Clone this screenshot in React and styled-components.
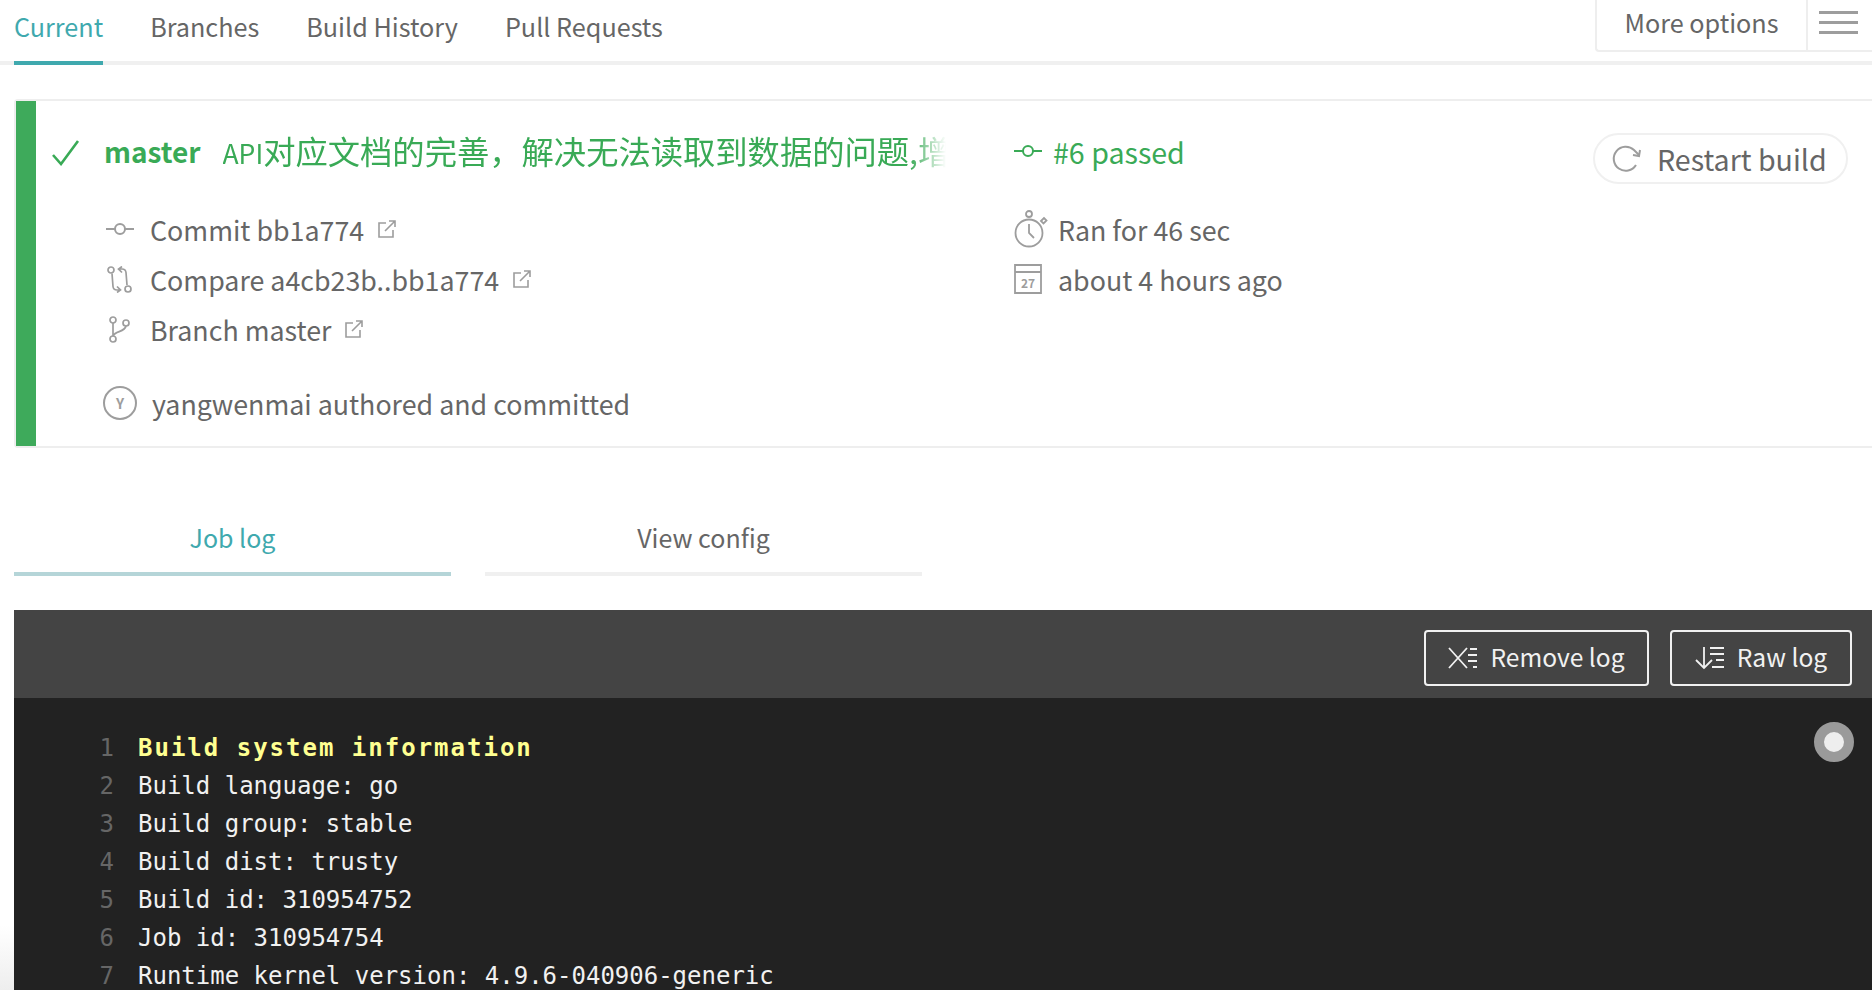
import React from 'react'
import styled, { createGlobalStyle } from 'styled-components'

const GlobalStyle = createGlobalStyle`
  html, body {
    margin: 0;
    padding: 0;
    height: 990px;
    overflow: hidden;
    background: #fff;
    color: #666;
    font-family: "Noto Sans CJK SC", "Noto Sans", sans-serif;
    font-size: 26.8px;
  }
`

const TEAL = '#3fa9ae'
const GREEN = '#39aa56'
const ICON = '#9d9d9d'

const Page = styled.div`
  width: 1872px;
  height: 990px;
  overflow: hidden;
  position: relative;
  background: linear-gradient(to bottom, #fff 925px, #eee 990px);
`

const TopBar = styled.div`
  display: flex;
  justify-content: space-between;
  height: 61px;
  border-bottom: 4px solid #f0f0f0;
  padding-left: 14px;
  font-size: 25.2px;
`

const NavTabs = styled.nav`
  display: flex;
  gap: 47px;
`

const NavTab = styled.a`
  height: 61px;
  line-height: 52px;
  margin-bottom: -4px;
  color: ${(p) => (p.$active ? TEAL : '#666')};
  border-bottom: 4px solid ${(p) => (p.$active ? TEAL : 'transparent')};
`

const OptionsBox = styled.div`
  display: flex;
  width: 277px;
  height: 52px;
  box-sizing: border-box;
  border: 2px solid #eee;
  border-top: none;
  border-right: none;
  border-bottom-left-radius: 4px;
`

const OptionsLabel = styled.div`
  width: 209px;
  text-align: center;
  line-height: 44px;
  border-right: 2px solid #eee;
`

const Burger = styled.div`
  flex: 1;
  display: flex;
  flex-direction: column;
  gap: 7px;
  padding: 11px 14px 0 11px;
`

const BurgerLine = styled.span`
  display: block;
  height: 3px;
  background: #9d9d9d;
`

const BuildCard = styled.section`
  display: flex;
  height: 349px;
  margin: 34px 0 0 14px;
  box-sizing: border-box;
  border: 2px solid #eee;
  border-right: none;
  border-top-left-radius: 4px;
  border-bottom-left-radius: 4px;
`

const StatusBar = styled.div`
  width: 20px;
  background: #3eaa5b;
`

const MainCol = styled.div`
  width: 978px;
  padding-top: 29px;
`

const SideCol = styled.div`
  flex: 1;
  padding-top: 29px;
`

const HeadRow = styled.div`
  display: flex;
  align-items: center;
  height: 42px;
  margin-bottom: 32px;
  color: ${GREEN};
  font-size: ${(p) => p.$size || 28}px;
  white-space: nowrap;
`

const CheckSlot = styled.div`
  width: 68px;
  padding: 4px 0 0 16px;
  box-sizing: border-box;
  display: flex;
`

const BranchName = styled.strong`
  font-weight: 600;
  margin-right: 22px;
`

const CommitMessage = styled.div`
  width: 723px;
  overflow: hidden;
  line-height: 42px;
  font-size: 26.5px;
  -webkit-mask-image: linear-gradient(to right, #000 95%, transparent 100%);
  mask-image: linear-gradient(to right, #000 95%, transparent 100%);
`

const Chinese = styled.span`
  font-size: 32.3px;
`

const InfoRow = styled.div`
  display: flex;
  align-items: center;
  height: 50px;
  padding-left: ${(p) => p.$indent || 0}px;
  margin-top: ${(p) => p.$gap || 0}px;
  white-space: nowrap;
`

const IconSlot = styled.span`
  display: flex;
  box-sizing: border-box;
  width: ${(p) => p.$width}px;
  padding-left: ${(p) => p.$pad || 0}px;
  flex: none;
`

const OutLink = styled.span`
  display: flex;
  margin-left: 14px;
`

const Avatar = styled.span`
  width: 30px;
  height: 30px;
  border: 2px solid ${ICON};
  border-radius: 50%;
  display: flex;
  align-items: center;
  justify-content: center;
  font-size: 14px;
  font-weight: 700;
  color: ${ICON};
  margin: 0 15px 0 -1px;
`

const RestartButton = styled.button`
  align-self: flex-start;
  display: flex;
  align-items: center;
  width: 255px;
  height: 51px;
  margin: 32px 24px 0 0;
  padding: 0 0 0 17px;
  box-sizing: border-box;
  background: #fff;
  border: 2px solid #f0f0f0;
  border-radius: 26px;
  font: inherit;
  font-size: 28.6px;
  color: #666;
  gap: 15px;
`

const LogTabs = styled.div`
  display: flex;
  gap: 34px;
  margin: 72px 0 0 14px;
`

const LogTab = styled.a`
  width: 437px;
  height: 52px;
  text-align: center;
  line-height: 34px;
  font-size: 25px;
  color: ${(p) => (p.$active ? TEAL : '#666')};
  border-bottom: 4px solid ${(p) => (p.$active ? '#b5d5d8' : '#f0f0f0')};
`

const LogPanel = styled.section`
  margin: 34px 0 0 14px;
`

const LogToolbar = styled.div`
  display: flex;
  justify-content: flex-end;
  gap: 21px;
  height: 88px;
  box-sizing: border-box;
  padding: 20px 20px 0 0;
  background: #444;
`

const LogButton = styled.a`
  display: flex;
  align-items: center;
  justify-content: center;
  gap: 12px;
  height: 56px;
  width: ${(p) => p.$width}px;
  box-sizing: border-box;
  padding-bottom: 5px;
  border: 2px solid #f1f1f1;
  border-radius: 4px;
  color: #f1f1f1;
  font-size: 24.6px;

  svg {
    margin-top: 5px;
  }
`

const LogBody = styled.div`
  position: relative;
  height: 291px;
  padding-top: 31px;
  background: #222;
  font-family: "DejaVu Sans Mono", "Liberation Mono", monospace;
  font-size: 24px;
  line-height: 38px;
`

const LogLine = styled.div`
  display: flex;
  white-space: pre;
  color: ${(p) => (p.$head ? '#ffff91' : '#f1f1f1')};
  font-weight: ${(p) => (p.$head ? 700 : 400)};
  letter-spacing: ${(p) => (p.$head ? 2 : 0)}px;
`

const LineNumber = styled.span`
  width: 124px;
  padding-right: 24px;
  box-sizing: border-box;
  text-align: right;
  color: #666;
  font-weight: 400;
  letter-spacing: 0;
`

const ScrollDot = styled.div`
  position: absolute;
  top: 24px;
  right: 18px;
  width: 20px;
  height: 20px;
  border: 10px solid #9a9a9a;
  border-radius: 50%;
  background: #eee;
`

const CheckIcon = () => (
  <svg width="28" height="26" viewBox="0 0 28 26" fill="none" stroke={GREEN} strokeWidth="2.6">
    <path d="M1 15l8 9L26 1" />
  </svg>
)

const CommitIcon = ({ color = ICON }) => (
  <svg width="28" height="14" viewBox="0 0 28 14" fill="none" stroke={color} strokeWidth="2">
    <circle cx="14" cy="7" r="5" />
    <path d="M0 7h9M19 7h9" />
  </svg>
)

const CompareIcon = () => (
  <svg width="25" height="27" viewBox="0 0 25 27" fill="none" stroke={ICON} strokeWidth="1.7">
    <circle cx="4" cy="4" r="3" />
    <circle cx="21" cy="23" r="3" />
    <path d="M5 7.500l1 13c.3 3 2 3.500 4 3.500h3M10 20.500l3.500 3.500-3.500 2.500M20 19L19 6.500C18.700 3.500 17 3 15 3h-2M15 6.500L11.500 3 15 .5" />
  </svg>
)

const BranchIcon = () => (
  <svg width="22" height="27" viewBox="0 0 22 27" fill="none" stroke={ICON} strokeWidth="1.7">
    <circle cx="4" cy="4" r="3" />
    <circle cx="4" cy="23" r="3" />
    <circle cx="17" cy="7" r="3" />
    <path d="M4 7v13M4.500 19.500C6 15 16 16 17 10" />
  </svg>
)

const ExternalIcon = () => (
  <svg width="18" height="18" viewBox="0 0 18 18" fill="none" stroke={ICON} strokeWidth="1.6">
    <path d="M8 3H1v14h14v-7M7 11L17 1M11 1h6v6" />
  </svg>
)

const WatchIcon = () => (
  <svg width="34" height="38" viewBox="0 0 34 38" fill="none" stroke={ICON} strokeWidth="1.8">
    <circle cx="15" cy="4" r="3" />
    <circle cx="15" cy="23" r="13.500" />
    <path d="M15 14v9l5 5M27 11l3-3 2.500 2.500-3 3z" />
  </svg>
)

const CalendarIcon = () => (
  <svg width="28" height="30" viewBox="0 0 28 30" fill="none" stroke={ICON} strokeWidth="1.8">
    <path d="M1 1h26v28H1zM1 8h26" />
    <text x="14" y="24" fontSize="12" fontWeight="700" textAnchor="middle" fill={ICON} stroke="none">27</text>
  </svg>
)

const RestartIcon = () => (
  <svg width="30" height="28" viewBox="0 0 30 28" fill="none" stroke={ICON} strokeWidth="2">
    <path d="M24 20a12 12 0 1 1-2-15l5 5" />
    <path d="M28 5l-1 6-6-1" />
  </svg>
)

const RemoveIcon = () => (
  <svg width="30" height="22" viewBox="0 0 30 22" fill="none" stroke="#f1f1f1" strokeWidth="1.8">
    <path d="M1 1l18 20M19 1L1 21M22 2h7M20 8h9M20 14h9M25 20h4" />
  </svg>
)

const RawIcon = () => (
  <svg width="30" height="24" viewBox="0 0 30 24" fill="none" stroke="#f1f1f1" strokeWidth="1.8">
    <path d="M9 1v21M1 14l8 8 8-8M15 2h14M15 8h14M21 14h8M17 21h12" />
  </svg>
)

const logLines = [
  'Build system information',
  'Build language: go',
  'Build group: stable',
  'Build dist: trusty',
  'Build id: 310954752',
  'Job id: 310954754',
  'Runtime kernel version: 4.9.6-040906-generic',
]

const App = () => {
  return (
    <Page>
      <GlobalStyle />
      <TopBar>
        <NavTabs>
          <NavTab $active>Current</NavTab>
          <NavTab>Branches</NavTab>
          <NavTab>Build History</NavTab>
          <NavTab>Pull Requests</NavTab>
        </NavTabs>
        <OptionsBox>
          <OptionsLabel>More options</OptionsLabel>
          <Burger>
            <BurgerLine />
            <BurgerLine />
            <BurgerLine />
          </Burger>
        </OptionsBox>
      </TopBar>

      <BuildCard>
        <StatusBar />
        <MainCol>
          <HeadRow>
            <CheckSlot><CheckIcon /></CheckSlot>
            <BranchName>master</BranchName>
            <CommitMessage>API<Chinese>对应文档的完善，解决无法读取到数据的问题,增</Chinese></CommitMessage>
          </HeadRow>
          <InfoRow $indent={68}>
            <IconSlot $width={46} $pad={2}><CommitIcon /></IconSlot>
            Commit bb1a774
            <OutLink><ExternalIcon /></OutLink>
          </InfoRow>
          <InfoRow $indent={68}>
            <IconSlot $width={46} $pad={3}><CompareIcon /></IconSlot>
            Compare a4cb23b..bb1a774
            <OutLink><ExternalIcon /></OutLink>
          </InfoRow>
          <InfoRow $indent={68}>
            <IconSlot $width={46} $pad={5}><BranchIcon /></IconSlot>
            Branch master
            <OutLink><ExternalIcon /></OutLink>
          </InfoRow>
          <InfoRow $indent={68} $gap={24}>
            <Avatar>Y</Avatar>
            yangwenmai authored and committed
          </InfoRow>
        </MainCol>
        <SideCol>
          <HeadRow $size={28.6}>
            <IconSlot $width={39}><CommitIcon color={GREEN} /></IconSlot>
            #6 passed
          </HeadRow>
          <InfoRow>
            <IconSlot $width={44}><WatchIcon /></IconSlot>
            Ran for 46 sec
          </InfoRow>
          <InfoRow>
            <IconSlot $width={44}><CalendarIcon /></IconSlot>
            about 4 hours ago
          </InfoRow>
        </SideCol>
        <RestartButton>
          <RestartIcon />
          Restart build
        </RestartButton>
      </BuildCard>

      <LogTabs>
        <LogTab $active>Job log</LogTab>
        <LogTab>View config</LogTab>
      </LogTabs>

      <LogPanel>
        <LogToolbar>
          <LogButton $width={225}><RemoveIcon />Remove log</LogButton>
          <LogButton $width={182}><RawIcon />Raw log</LogButton>
        </LogToolbar>
        <LogBody>
          <ScrollDot />
          {logLines.map((line, i) => (
            <LogLine key={i} $head={i === 0}>
              <LineNumber>{i + 1}</LineNumber>
              {line}
            </LogLine>
          ))}
        </LogBody>
      </LogPanel>
    </Page>
  )
}

export default App
